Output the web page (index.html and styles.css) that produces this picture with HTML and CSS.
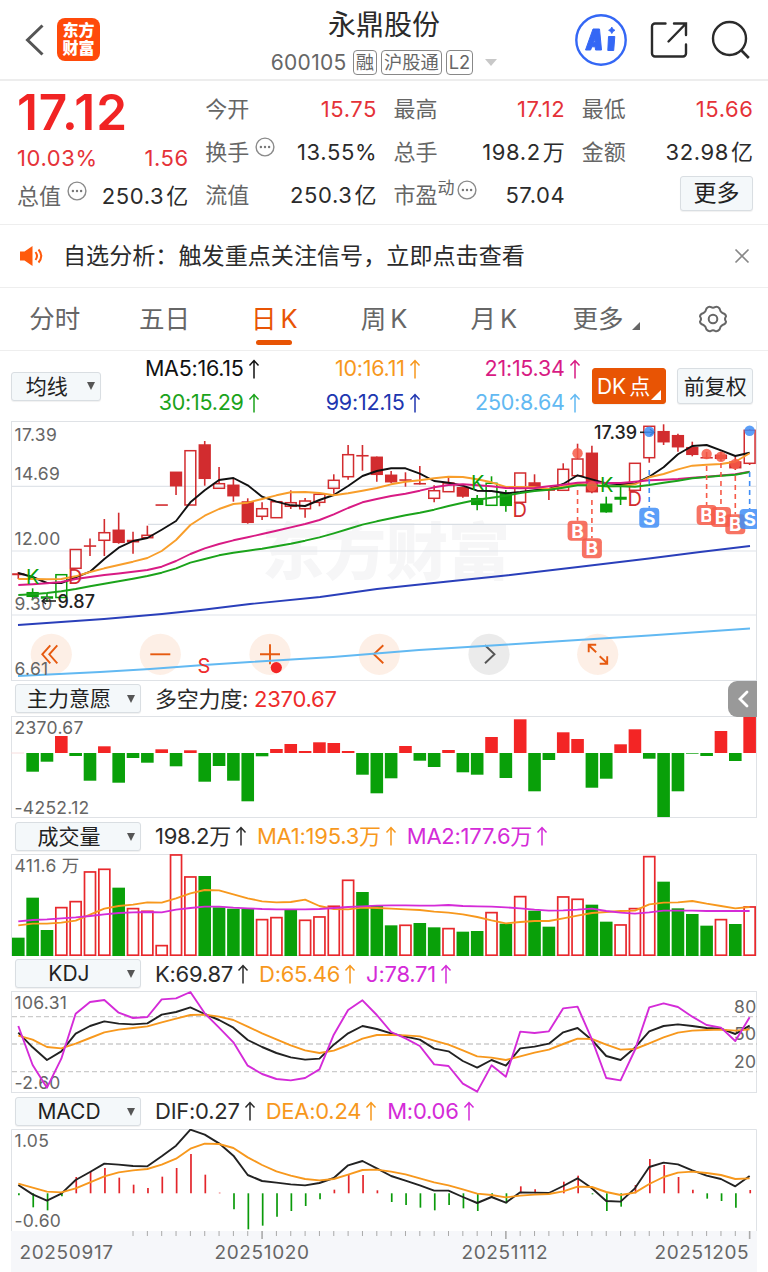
FILE: index.html
```html
<!DOCTYPE html>
<html lang="zh-CN">
<head>
	<meta charset="UTF-8">
	<meta name="viewport" content="width=device-width, initial-scale=1.0">
	<title>永鼎股份 600105</title>
	<link rel="stylesheet" href="styles.css">
</head>
<body>
	<svg class="defs" width="0" height="0">
		<symbol id="up" viewBox="0 0 12 20"><path d="M6 19.5V1.5M1.5 6.5L6 1.5l4.5 5" fill="none" stroke="currentColor" stroke-width="1.5"/></symbol>
		<symbol id="more" viewBox="0 0 20 20"><circle cx="10" cy="10" r="8.9" fill="none" stroke="#8a8a8a" stroke-width="1.4"/><g fill="#777"><circle cx="5.9" cy="10" r="1.2"/><circle cx="10" cy="10" r="1.2"/><circle cx="14.1" cy="10" r="1.2"/></g></symbol>
	</svg>

	<!-- header -->
	<header class="header">
		<div class="header-left">
			<svg width="20" height="32" viewBox="0 0 20 32"><path d="M17.500 1.500L2.500 16l15 14.500" fill="none" stroke="#555" stroke-width="3"/></svg>
			<div class="logo">东方<br>财富</div>
		</div>
		<div class="header-title">
			<h1>永鼎股份</h1>
			<div class="code">
				<span class="num">600105</span>
				<span class="tag">融</span>
				<span class="tag">沪股通</span>
				<span class="tag">L2</span>
				<i class="caret"></i>
			</div>
		</div>
		<div class="header-right">
			<svg width="52" height="52" viewBox="0 0 52 52">
				<circle cx="26" cy="26" r="24.700" fill="none" stroke="#3467f5" stroke-width="2.400"/>
				<path fill-rule="evenodd" d="M10.500 36L18 15h6.500l2 21h-6l-.3-3.200h-3.400L15.600 36zM18.600 28.600h1.500l-.1-3.800z" fill="#3467f5" stroke="#3467f5" stroke-linejoin="round"/>
				<path d="M33.500 22.500h6.300l-1.100 14h-5.900z" fill="#3467f5" stroke="#3467f5" stroke-linejoin="round"/>
				<path d="M36.800 13q.8 2.600 3.200 3.300-2.400.8-3.200 3.300-.8-2.500-3.200-3.300 2.400-.7 3.200-3.300z" fill="#3467f5" stroke="#3467f5" stroke-width=".8"/>
			</svg>
			<svg width="40" height="38" viewBox="0 0 40 38"><path d="M16.500 2.500H6a3 3 0 0 0-3 3V32.500a3 3 0 0 0 3 3H34a3 3 0 0 0 3-3V23.500M25 2.500h12V14M36.500 3L19.500 20.500" fill="none" stroke="#2b2b2b" stroke-width="2.400" stroke-linecap="round"/></svg>
			<svg width="40" height="40" viewBox="0 0 40 40"><circle cx="18.500" cy="18.500" r="16.500" fill="none" stroke="#2b2b2b" stroke-width="2.400"/><path d="M30 30l7.800 8" stroke="#2b2b2b" stroke-width="2.600"/></svg>
		</div>
	</header>

	<!-- quote -->
	<section class="quote">
		<div class="quote-col main">
			<div class="price">17.12</div>
			<div class="row red"><b>10.03%</b><b>1.56</b></div>
			<div class="row"><span>总值<svg class="more"><use href="#more"/></svg></span><b>250.3<em>亿</em></b></div>
		</div>
		<div class="quote-col">
			<div class="row"><span>今开</span><b class="red">15.75</b></div>
			<div class="row"><span>换手<svg class="more"><use href="#more"/></svg></span><b>13.55%</b></div>
			<div class="row"><span>流值</span><b>250.3<em>亿</em></b></div>
		</div>
		<div class="quote-col">
			<div class="row"><span>最高</span><b class="red">17.12</b></div>
			<div class="row"><span>总手</span><b>198.2<em>万</em></b></div>
			<div class="row"><span>市盈<sup>动</sup><svg class="more tight"><use href="#more"/></svg></span><b>57.04</b></div>
		</div>
		<div class="quote-col">
			<div class="row"><span>最低</span><b class="red">15.66</b></div>
			<div class="row"><span>金额</span><b>32.98<em>亿</em></b></div>
			<div class="row end"><button class="btn">更多</button></div>
		</div>
	</section>

	<!-- notice -->
	<section class="notice">
		<svg width="24" height="22" viewBox="0 0 24 22"><path d="M0 6.500h4.500L12.500 1v20l-8-5.500H0z" fill="#ff5a0c"/><path d="M15.500 7q3 4 0 8M18.500 4.500q5.500 6.500 0 13" fill="none" stroke="#ff5a0c" stroke-width="2"/></svg>
		<p>自选分析：触发重点关注信号，立即点击查看</p>
		<svg width="16" height="16" viewBox="0 0 16 16"><path d="M1.500 1.500l13 13M14.500 1.500l-13 13" stroke="#888" stroke-width="1.700"/></svg>
	</section>

	<!-- period tabs -->
	<nav class="tabs">
		<a>分时</a>
		<a>五日</a>
		<a class="on">日<i>K</i></a>
		<a>周<i>K</i></a>
		<a>月<i>K</i></a>
		<a class="drop">更多</a>
		<a><svg width="30" height="28" viewBox="0 0 30 28"><path d="M8.500 3.500Q11 1 13 2.200q2 1.200 4 0 2.200-1.200 4.500 1.300.8 3.500 3 4.500 3.500 1 3.500 3.500-2 2.500 0 5 0 2.500-3.500 3.500-2.200 1-3 4.500-2.300 2.500-4.500 1.300-2-1.200-4 0-2 1.200-4.500-1.300-.8-3.500-3-4.500Q2 19 2 16.500q2-2.500 0-5Q2 9 5.500 8q2.200-1 3-4.500z" fill="none" stroke="#666" stroke-width="2"/><circle cx="15" cy="14" r="4.300" fill="none" stroke="#666" stroke-width="2"/></svg></a>
	</nav>

	<!-- moving averages -->
	<section class="ma">
		<button class="btn select">均线</button>
		<div class="ma-list">
			<span class="c-black">MA5:16.15<svg class="up"><use href="#up"/></svg></span>
			<span class="c-orange">10:16.11<svg class="up"><use href="#up"/></svg></span>
			<span class="c-pink">21:15.34<svg class="up"><use href="#up"/></svg></span>
			<span class="c-green">30:15.29<svg class="up"><use href="#up"/></svg></span>
			<span class="c-blue">99:12.15<svg class="up"><use href="#up"/></svg></span>
			<span class="c-sky">250:8.64<svg class="up"><use href="#up"/></svg></span>
		</div>
		<button class="btn dk">DK<em>点</em></button>
		<button class="btn fq">前复权</button>
	</section>

	<main class="charts">
		<svg class="chart k" id="kline" viewBox="11 421 746 260"></svg>

		<div class="bar first">
			<button class="btn select">主力意愿</button>
			<span>多空力度: <b class="c-red">2370.67</b></span>
			<i class="side"><svg width="12" height="18" viewBox="0 0 12 18"><path d="M10 2L3 9l7 7" fill="none" stroke="#fff" stroke-width="2.800" stroke-linecap="round"/></svg></i>
		</div>
		<svg class="chart" id="force" viewBox="11 716 746 102"></svg>

		<div class="bar">
			<button class="btn select">成交量</button>
			<span>198.2万<svg class="up"><use href="#up"/></svg></span>
			<span class="c-orange">MA1:195.3万<svg class="up"><use href="#up"/></svg></span>
			<span class="c-purple">MA2:177.6万<svg class="up"><use href="#up"/></svg></span>
		</div>
		<svg class="chart" id="volume" viewBox="11 854 746 102"></svg>

		<div class="bar short">
			<button class="btn select">KDJ</button>
			<span>K:69.87<svg class="up"><use href="#up"/></svg></span>
			<span class="c-orange">D:65.46<svg class="up"><use href="#up"/></svg></span>
			<span class="c-purple">J:78.71<svg class="up"><use href="#up"/></svg></span>
		</div>
		<svg class="chart" id="kdj" viewBox="11 991 746 102"></svg>

		<div class="bar">
			<button class="btn select">MACD</button>
			<span>DIF:0.27<svg class="up"><use href="#up"/></svg></span>
			<span class="c-orange">DEA:0.24<svg class="up"><use href="#up"/></svg></span>
			<span class="c-purple">M:0.06<svg class="up"><use href="#up"/></svg></span>
		</div>
		<svg class="chart" id="macd" viewBox="11 1129 746 102"></svg>
		<svg class="axis" id="axis" viewBox="11 1231 746 41"></svg>
	</main>

	<script src="script.js"></script>
</body>
</html>
```
FILE: styles.css
```css
* {box-sizing: border-box; }
body {margin: 0; width: 768px; background: #fff; color: #2b2b2b; font-family: "Inter", "Noto Sans CJK SC", sans-serif; font-size: 22px; overflow-x: hidden; }
h1, p {margin: 0; font-weight: 400; }
b, em, i {font-weight: inherit; font-style: normal; }
svg {display: block; flex: none; }
.defs {position: absolute; }
.red, .c-red {color: #ee2b2b; }
.c-black {color: #111; }
.c-orange {color: #f7981d; }
.c-pink {color: #d81b84; }
.c-green {color: #1ba31b; }
.c-blue {color: #2036b0; }
.c-sky {color: #62b9f2; }
.c-purple {color: #d42bd8; }

/* 버튼 */
.btn {display: flex; align-items: center; justify-content: center; padding: 0; border: 1px solid #d9dee2; border-radius: 3px; background: #f4f8fa; color: #222; font: inherit; font-size: 21px; line-height: 1; box-shadow: 0 1px 1px rgba(0,0,0,0.06); }
.select {position: relative; padding-right: 18px; }
.select::after {content: ""; position: absolute; right: 5px; top: 9px; border: 4.500px solid transparent; border-top: 8px solid #555; border-bottom: 0; }
.up {width: 12px; height: 20px; margin-left: 4px; }

/* header */
.header {display: grid; grid-template-columns: 219px 1fr 219px; height: 81px; border-bottom: 2px solid #ededed; }
.header-left {display: flex; align-items: center; padding-left: 25px; }
.logo {width: 43px; height: 43px; margin-left: 12px; padding-top: 4px; border-radius: 8px; background: #ff4a0a; color: #fff; font-size: 16px; font-weight: 900; line-height: 17.500px; text-align: center; }
.header-title {display: flex; flex-direction: column; align-items: center; }
.header-title h1 {height: 49px; font-size: 28px; line-height: 50px; }
.code {display: flex; align-items: center; gap: 4px; height: 27px; color: #666; font-size: 21px; }
.code .num {margin-right: 2px; letter-spacing: 0.300px; }
.tag {height: 25px; padding: 0 2px; border: 1px solid #888; border-radius: 4px; font-size: 18.300px; line-height: 22px; }
.caret {margin-left: 8px; border: 6px solid transparent; border-top: 7px solid #c8c8c8; border-bottom: 0; }
.header-right {display: flex; align-items: center; justify-content: flex-end; gap: 22px; padding-right: 17px; }

/* quote */
.quote {display: grid; grid-template-columns: repeat(4, 1fr); gap: 17px; height: 144px; padding: 6px 15px 0 17px; border-bottom: 1px solid #eee; }
.row {display: flex; align-items: center; justify-content: space-between; height: 43px; line-height: 1; white-space: nowrap; }
.row span {display: flex; align-items: center; color: #666; }
.row b {display: flex; align-items: center; letter-spacing: 0.600px; margin-right: -0.600px; }
.row em {margin-left: 2px; }
.row .red, .row.red b {color: #e53238; }
.row sup {margin-top: -12px; font-size: 17px; line-height: 1; }
.more {width: 20px; height: 20px; margin: -9px 0 0 6px; }
.more.tight {margin-left: 2px; }
.main .price {height: 52px; color: #f12424; font-size: 49.500px; font-weight: 600; line-height: 51px; letter-spacing: 0.900px; }
.main .row:nth-child(2) {height: 38px; }
.main .row:nth-child(3) {height: 37px; }
.row.end {justify-content: flex-end; }
.row .btn {width: 73px; height: 35px; margin-top: -2px; font-size: 23px; }

/* notice */
.notice {display: flex; align-items: center; height: 63px; padding: 0 18px 0 20px; border-bottom: 1px solid #eee; }
.notice p {flex: 1; margin: -3px 0 0 19px; font-size: 23.100px; line-height: 1; font-family: "Noto Sans CJK SC", sans-serif; }

/* tabs */
.tabs {display: grid; grid-template-columns: repeat(7, 1fr); height: 63px; border-bottom: 1px solid #eee; }
.tabs a {position: relative; display: flex; align-items: center; justify-content: center; gap: 4px; color: #666; font-size: 25.500px; line-height: 1; padding-bottom: 1px; }
.tabs .on {color: #e85404; }
.tabs .on::after {content: ""; position: absolute; left: 37px; bottom: 5px; width: 36px; height: 5px; border-radius: 3px; background: #e85404; }
.tabs .drop {padding-right: 11px; }
.tabs .drop::after {content: ""; position: absolute; right: 18px; bottom: 20px; border: 4px solid #666; border-top-color: transparent; border-left-color: transparent; }

/* ma */
.ma {display: flex; align-items: center; height: 70px; padding: 0 15px 0 11px; }
.ma .select {width: 90px; height: 29px; }
.ma-list {display: grid; grid-template-columns: 159px 161px 160px; grid-auto-rows: 34px; margin-right: 11px; font-size: 21.500px; letter-spacing: -0.250px; line-height: 1; }
.ma-list span {display: flex; align-items: center; justify-content: flex-end; }
.dk {position: relative; width: 75px; height: 36px; border-color: #e85404; background: #e85404; color: #fff; padding-right: 11px; }
.dk em {margin-left: 3px; }
.dk::after {content: ""; position: absolute; right: 4px; bottom: 3px; border: 5px solid #fff; border-top-color: transparent; border-left-color: transparent; }
.fq {width: 76px; height: 36px; margin-left: 11px; }

/* charts */
.charts {padding-left: 11px; }
.chart {width: 746px; height: 102px; }
.chart.k {height: 260px; }
.axis {width: 746px; height: 41px; background: #f6f7fa; }
.bar {position: relative; display: flex; align-items: center; gap: 10px; width: 746px; height: 36px; padding-left: 4px; line-height: 1; letter-spacing: -0.250px; }
.bar.first, .bar.short {height: 35px; }
.bar .select {width: 126px; height: 29px; margin-right: 4px; letter-spacing: 0; }
.bar .select::after {top: 10px; }
.bar span {display: flex; align-items: center; white-space: pre; }
.side {position: absolute; right: 0; top: 0; display: flex; align-items: center; justify-content: center; width: 29px; height: 36px; border-radius: 9px 0 0 9px; background: #999; }

/* svg 텍스트 */
.lab {font-size: 17.500px; letter-spacing: 0.300px; fill: #666; }
.date {font-size: 19px; letter-spacing: 0.650px; fill: #666; }
.mark {font-size: 20px; }
.pt {font-size: 18px; font-weight: 500; fill: #222; }
.badge {font-size: 19px; font-weight: 700; fill: #fff; text-anchor: middle; }
.wm {font-size: 62px; font-weight: 900; fill: #f6f6f7; }
```
FILE: script.js
```js
const N = 52, X0 = 18.3, STEP = 14.34;
const RED = '#d22c2f', GREEN = '#0a9f0a', HOT = '#f32525', ORANGE = '#f7981d', PURPLE = '#d42bd8', BLACK = '#222';
const x = i => X0 + STEP * i;

const line = (x1, y1, x2, y2, c, w = 1.6, dash = '') =>
	`<line x1="${x1}" y1="${y1}" x2="${x2}" y2="${y2}" stroke="${c}" stroke-width="${w}" stroke-dasharray="${dash}"/>`;
const text = (tx, ty, s, cls, fill) => `<text x="${tx}" y="${ty}" class="${cls}"${fill ? ` fill="${fill}"` : ''}>${s}</text>`;
const poly = (pts, c, w = 1.9) => `<polyline points="${pts.map(p => p.join()).join(' ')}" fill="none" stroke="${c}" stroke-width="${w}" stroke-linejoin="round"/>`;
const frame = (t, h) => `<rect x="11.5" y="${t + .5}" width="745" height="${h - 1}" fill="none" stroke="#dfe2e6"/>`;
const draw = (id, html) => document.getElementById(id).innerHTML = html;

// series are stored in 1/3 px under the top of their section
const series = (arr, top, c, w) => poly(arr.map((v, i) => [x(i), top + v / 3]), c, w);

/* ---------- K line ---------- */
// type, body top, body bottom, high, low   (r hollow red, R filled red, g / G the same in green)
const candles = [
	['r',574,574.5,572,579],['G',592.7,596.3,588.3,600.3],['g',597,598,593,602],['g',574.7,597.5,574,598],
	['r',549.5,568.3,549,569],['r',546,546,538.5,556],['r',532.7,540.3,519,556],['R',530.3,542.3,512.7,543.7],
	['r',540.5,541.7,531.7,553.7],['r',535.3,537.7,525.7,538],['r',505,505,505,505],['R',472.3,485.7,472,495],
	['r',450.7,505,450,505],['R',445,478.3,441,485.7],['r',483.7,488.3,467,489],['R',485.3,495.7,478.3,501.7],
	['R',502,522.3,498.3,523.7],['r',508.7,516.3,502.3,520],['r',501.7,517.7,501,518],['r',502.7,506.3,490.3,509],
	['r',501,508.7,498,517.7],['r',494.3,502.3,493,506.3],['r',480.3,488.3,474.3,493.7],['r',454.7,476.7,445,479.7],
	['r',455.7,455.7,445,470.7],['R',457.3,474.3,456.5,481.7],['R',475.3,481.7,471,483.3],['r',480,480,472.3,486.7],
	['r',483.7,483.7,466,484.5],['r',490.7,498.3,485.3,502.3],['r',483,491.7,477.7,492],['R',487.7,496,487,497.7],
	['G',498.7,504.3,495,510.3],['g',483.3,505.3,476.3,506],['G',493.7,505.3,490,511.7],['r',473,502.3,473,502.3],
	['R',483,487.7,474.3,488.3],['r',490,490,490,500],['r',469.3,490.3,463.3,491],['r',459,475.7,443.7,476],
	['R',453.3,491.7,445.7,493.3],['G',504.3,511.7,496.7,512.7],['g',497.5,499,485.7,505],['r',463.3,490.3,463,491],
	['r',426.3,457.7,426,462.7],['R',431.7,441.7,424.3,445],['R',435.7,446.7,433.7,451.7],['R',447.7,454.3,441.7,456.3],
	['r',457.7,457.7,452,459],['R',455.3,458.3,451.7,461],['R',462,467.7,456.7,470],['r',430.3,463.3,429,465]
];
const candle = ([t, a, b, hi, lo], i) => {
	const c = t.toLowerCase() === 'r' ? RED : GREEN;
	const fill = t === t.toUpperCase() ? c : 'none';
	return line(x(i), hi, x(i), a, c) + line(x(i), b, x(i), lo, c)
		+ `<rect x="${x(i) - 5.4}" y="${a}" width="10.8" height="${b - a || .1}" fill="${fill}" stroke="${c}" stroke-width="1.5"/>`;
};

const ma5 = [573,577,583,583,577.3,571.7,559,547.7,541,538,529.7,521,502.3,490.3,480,478,485.3,496.7,501.7,505.3,506,500,495,486,476,471,468.3,468.3,473.7,481,482.7,485.7,490.7,491,493.3,492,490.3,489,484,475.3,479.3,483.3,484.3,483.7,476.7,467.3,454.3,446,445,450.3,456,452.7];
const ma10 = [579,579,579.2,579,576.3,572,568.3,565,561.7,558,551,540,525,515.7,509,504,502.7,499,495.3,492.3,492,493,495.3,493.3,490.7,488,484.3,481.7,480.3,478.3,476.7,477,479.3,482.3,487,487,487.3,489,486.7,483.7,485.3,486.3,486,484.3,477.3,474,469.3,465.7,464.7,464,461.7,453.3];
const ma21 = [585,584.3,583.3,582,579,577,575,573.5,571.7,570,566.7,561,554,548.3,544,540.3,537.3,534,530.7,527.3,524,520,514.3,508,502.3,499,496,493.7,490.7,487.3,485,484.3,485.3,486.3,488,488.3,488,486.3,484.7,482.7,482.3,483,483,481.7,480.3,479.7,479,477.8,476.7,475.5,474.3,471.7];
const ma30 = [595,594.3,593,591.3,589,586.3,583.7,581.2,578.7,576,572.7,568.3,562.7,559,555.3,552.7,550.7,548.7,546.3,543.7,540.7,537.3,533.3,529,524.7,521.3,518.3,515.3,512.7,509.7,506,502.7,499.7,497.7,495.7,493,491,489.7,487.7,485.3,485.3,486.3,486.3,486.7,485,482.7,480.7,478.3,477,475.7,474.7,472];
const ma99 = [[18,625],[61,622],[104,619],[162,614],[205,609.5],[250,604],[320,597],[377,589],[448,581.5],[508,575.3],[578,567],[649,558.5],[700,552],[750,546]];
const ma250 = [[18,676],[100,672],[150,669],[204,665],[250,662],[333,657],[419,650],[508,644.5],[578,640],[649,635.5],[750,628.5]];
const track = arr => arr.map((v, i) => [x(i), v]);

// trade marks: bar index, letter, badge y, line start, dot y
const marks = [[39,'B',530.7,490,453.3],[40,'B',548.3,500,486.3],[48,'B',515,466,454],[49,'B',517,463,456.7],[50,'B',524.3,476,464],[44,'S',517.7,470,431.7],[51,'S',519,472,430.7]];
const mark = ([i, s, y, from, dot]) => {
	const c = s === 'B' ? '#f65a48' : '#3f8ef7';
	return line(x(i), from, x(i), y - 10, c, 1.6, '5 4')
		+ `<circle cx="${x(i)}" cy="${dot}" r="5.2" fill="${c}" opacity=".85"/>`
		+ `<rect x="${x(i) - 10}" y="${y - 10}" width="20" height="20" rx="4" fill="${c}" opacity=".85"/>`
		+ text(x(i), y + 7, s, 'badge');
};

const tool = (cx, d, grey) => `<circle cx="${cx}" cy="654.3" r="20.6" fill="${grey ? '#999' : '#f4b184'}" opacity=".2"/>`
	+ `<path transform="translate(${cx} 654.3)" d="${d}" fill="none" stroke="${grey ? '#555' : '#e65a10'}" stroke-width="1.9"/>`;

draw('kline',
	text(262, 575, '东方财富', 'wm')
	+ [486.3, 551, 615].map(y => line(11, y, 757, y, '#e0e4e9', 1.2)).join('')
	+ line(148, 524.3, 757, 524.3, '#d9dee4', 1.2)
	+ frame(421, 260)
	+ tool(51.3, 'M-1 -9L-9 0L-1 9M6 -9L-2 0L6 9') + tool(160.3, 'M-10 0H10')
	+ tool(270, 'M-10 0H10M0 -10V10') + tool(379.3, 'M4 -9L-5.500 0L4 9')
	+ tool(489, 'M-4 -9L5.500 0L-4 9', true)
	+ tool(597.7, 'M-1.500 -2L-9 -9M-9 -2V-9.500H-1.500M2 2L9.500 9M9.500 2V9.500H2')
	+ candles.map(candle).join('')
	+ poly(ma99, '#2a3fba') + poly(ma250, '#62b9f2')
	+ poly(track(ma5), '#111') + poly(track(ma10), '#f89e2b') + poly(track(ma21), '#d81b84') + poly(track(ma30), '#1ba31b')
	+ [['17.39', 440.7], ['14.69', 480], ['12.00', 545.3], ['9.30', 610], ['6.61', 674.5]].map(l => text(14.5, l[1], l[0], 'lab')).join('')
	+ text(26, 584, 'K', 'mark', GREEN) + text(471, 490, 'K', 'mark', GREEN) + text(600, 491.7, 'K', 'mark', GREEN)
	+ text(68, 584, 'D', 'mark', RED) + text(512.5, 517, 'D', 'mark', RED) + text(627.5, 505.5, 'D', 'mark', RED)
	+ text(197.5, 672.7, 'S', 'mark', '#ee2b2b')
	+ text(57.5, 607.7, '9.87', 'pt') + line(42, 601, 56, 601, '#222') + poly([[46, 598], [42, 601], [46, 604]], '#222', 1.4)
	+ text(594, 438.5, '17.39', 'pt') + line(640, 432.3, 654, 432.3, '#222') + poly([[650, 429.3], [654, 432.3], [650, 435.3]], '#222', 1.4)
	+ marks.map(mark).join('')
	+ '<circle cx="276.3" cy="667.6" r="5.6" fill="#f32525"/>'
);

/* ---------- 主力意愿 ---------- */
const force = [0,18.7,8.7,-17,3,27.7,-6.7,29.7,5,9.7,-3.7,13.3,-2.7,28.7,13,27.7,48.3,3.3,-4,-9,-2,-10.7,-10,-2,21.7,40.3,25.3,-7,7.7,14,-3,19.3,21.7,-16,25,-33.7,38.3,7,-20.7,-14,34.7,25.7,-8.7,-23.7,5.7,64,38.3,.7,3,-22,8,-36];
draw('force',
	frame(716, 102) + line(11, 753, 24, 753, '#f7dede', 1)
	+ force.map((v, i) => `<rect x="${x(i) - 6.3}" y="${v < 0 ? 753 + v : 753}" width="12.6" height="${Math.abs(v)}" fill="${v < 0 ? HOT : '#09a009'}"/>`).join('')
	+ text(14.5, 733.5, '2370.67', 'lab') + text(14.5, 814, '-4252.12', 'lab')
);

/* ---------- 成交量 ---------- */
const vol = [353,233,330,262,244,155,147,203,265,273,376,104,170,168,262,266,266,298,292,268,300,290,258,180,216,256,316,315,309,322,325,335,333,277,311,229,272,320,230,237,254,305,314,265,109,185,265,282,317,298,312,260];
const redVol = [3,4,5,6,8,9,10,11,12,17,18,20,21,22,23,27,30,33,35,38,39,42,43,44,49,51];
const vma1 = [316,311,311,308,302,284,266,258,254,247,248,235,220,210,211,223,235,244,247,246,239,258,267,268,263,264,266,268,270,275,278,283,291,301,310,306,303,303,295,287,279,276,273,272,253,248,247,243,251,258,265,261];
const vma2 = [304,300,298,295,292,288,283,279,277,276,277,269,264,260,260,263,265,267,268,268,268,267,264,261,259,257,256,256,257,257,255,258,259,260,262,265,269,272,271,269,266,273,278,281,277,272,272,272,273,273,273,273];
draw('volume',
	frame(854, 102)
	+ vol.map((v, i) => {
		const y = 820 + v / 3;
		return redVol.includes(i)
			? `<rect x="${x(i) - 5.5}" y="${y + .3}" width="11" height="${954.9 - y}" fill="none" stroke="#e8282c" stroke-width="1.7"/>`
			: `<rect x="${x(i) - 6.3}" y="${y}" width="12.6" height="${956 - y}" fill="#09a009"/>`;
	}).join('')
	+ series(vma1, 820, ORANGE) + series(vma2, 820, PURPLE)
	+ text(14.5, 871.5, '411.6 万', 'lab')
);

/* ---------- KDJ ---------- */
const k = [218,262,300,274,221,198,184,191,193,190,164,156,142,162,180,203,240,261,279,292,299,296,254,220,198,207,220,230,239,266,274,303,323,300,317,265,260,251,217,204,240,288,300,263,214,198,193,198,204,206,222,197];
const d = [227,239,261,265,251,234,217,209,204,199,187,176,165,164,170,180,200,220,238,256,271,279,272,255,236,225,225,226,229,242,254,271,289,293,300,289,278,269,252,236,237,254,269,267,250,232,218,212,210,209,212,208];
const j = [198,315,383,296,161,126,120,158,174,171,118,115,96,160,203,247,317,342,357,361,354,328,224,150,121,165,216,235,258,313,318,371,395,316,350,215,219,214,145,140,238,354,361,270,142,130,141,170,195,203,243,172];
draw('kdj',
	frame(991, 102)
	+ [1016.7, 1044, 1071.7].map(y => line(12, y, 757, y, '#ccc', 1.3, '5 3')).join('')
	+ text(14.5, 1009, '106.31', 'lab') + text(14.5, 1089, '-2.60', 'lab')
	+ text(734, 1012.5, '80', 'lab') + text(734, 1040, '50', 'lab') + text(734, 1067.5, '20', 'lab')
	+ series(k, 960, BLACK) + series(d, 960, ORANGE) + series(j, 960, PURPLE)
);

/* ---------- MACD ---------- */
const dif = [675,703,722,701,660,636,611,614,618,619,589,557,509,524,550,587,645,663,668,673,676,669,654,616,603,625,648,662,676,692,692,711,729,711,728,697,698,699,678,655,685,723,725,685,621,608,613,631,647,657,679,648];
const dea = [671,683,695,697,685,667,649,637,631,627,614,596,566,551,552,564,592,615,634,647,657,661,657,644,630,629,635,643,655,667,676,688,701,705,712,707,704,702,694,680,681,696,705,698,672,651,638,635,639,645,657,655];
const hist = [706,742,751,709,651,636,624,653,674,684,650,624,582,644,698,748,808,797,770,753,738,718,689,645,645,691,726,735,743,751,735,745,753,712,730,679,688,703,665,647,703,753,740,675,597,615,651,689,716,723,743,690];
draw('macd',
	`<path d="M11.5 1231V1129.500H756.500V1231" fill="none" stroke="#dfe2e6"/>`
	+ hist.map((v, i) => line(x(i) + .6, 1193.3, x(i) + .6, 960 + v / 3, v < 700 ? '#e3252b' : '#0a9a0a', 1.7)).join('')
	+ series(dif, 960, BLACK) + series(dea, 960, ORANGE)
	+ text(14.5, 1146.5, '1.05', 'lab') + text(14.5, 1226.5, '-0.60', 'lab')
);

/* ---------- dates ---------- */
let ticks = '';
for (let i = 8; i < N; i++) {
	const big = i % 17 === 0;
	ticks += line(x(i), 1231, x(i), big ? 1239 : 1236, '#aaa', big ? 1.6 : 1);
}
draw('axis', ticks
	+ text(19.5, 1258.5, '20250917', 'date') + text(214.5, 1258.5, '20251020', 'date')
	+ text(461.5, 1258.5, '20251112', 'date') + text(654.5, 1258.5, '20251205', 'date'));
```
